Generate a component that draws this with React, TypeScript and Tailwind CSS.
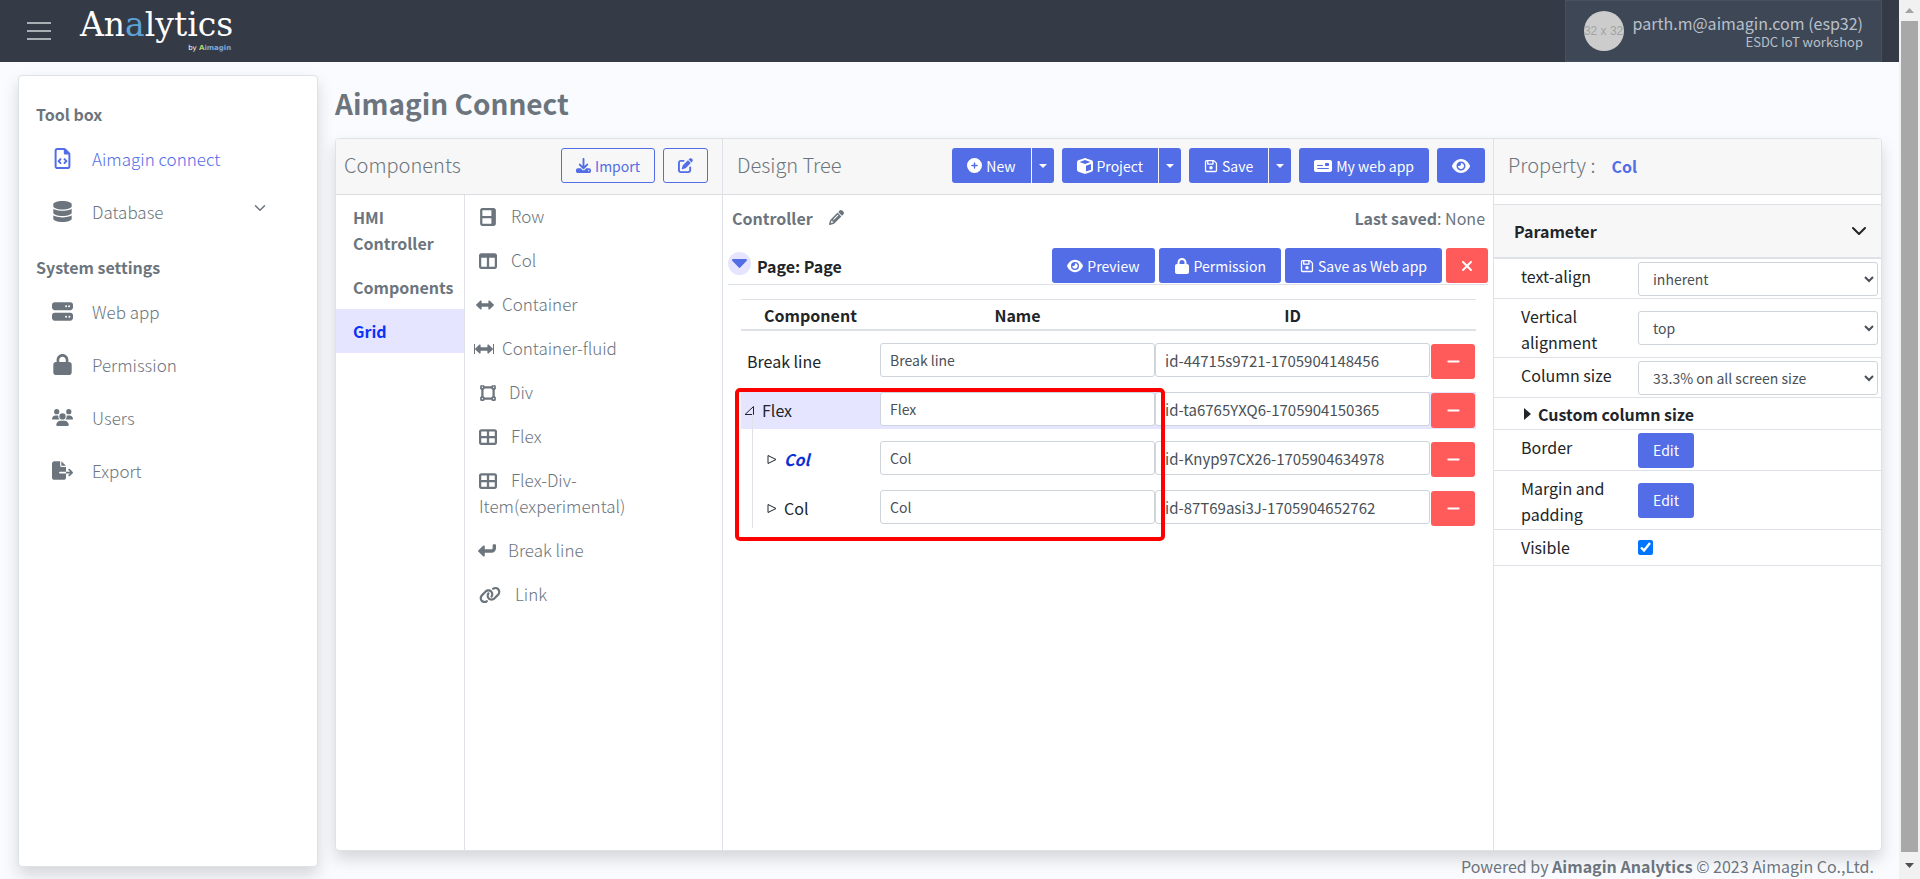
import type { ReactNode } from "react";
import type { IconType } from "react-icons";
import {
  FaCirclePlus,
  FaCube,
  FaDatabase,
  FaDownload,
  FaEye,
  FaFileExport,
  FaLeftRight,
  FaLink,
  FaLock,
  FaMinus,
  FaMoneyCheck,
  FaPencil,
  FaPenToSquare,
  FaRegFileCode,
  FaRegFloppyDisk,
  FaServer,
  FaTableCellsLarge,
  FaTableColumns,
  FaTurnDown,
  FaUsers,
  FaVectorSquare,
  FaXmark,
} from "react-icons/fa6";
import { FiChevronDown } from "react-icons/fi";
import clsx from "clsx";

const toolLinks = [
  { label: "Aimagin connect", icon: FaRegFileCode, active: true },
  { label: "Database", icon: FaDatabase, expandable: true },
];

const systemLinks = [
  { label: "Web app", icon: FaServer },
  { label: "Permission", icon: FaLock },
  { label: "Users", icon: FaUsers },
  { label: "Export", icon: FaFileExport },
];

const treeRows = [
  { kind: "Break line", id: "id-44715s9721-1705904148456", level: 0 },
  { kind: "Flex", id: "id-ta6765YXQ6-1705904150365", level: 0, open: true },
  { kind: "Col", id: "id-Knyp97CX26-1705904634978", level: 1, selected: true },
  { kind: "Col", id: "id-87T69asi3J-1705904652762", level: 1 },
];

type SideLinkProps = {
  label: string;
  icon: IconType;
  active?: boolean;
  expandable?: boolean;
};

function SideLink({ label, icon: Icon, active, expandable }: SideLinkProps) {
  return (
    <a href="#" className={clsx("flex h-[53px] items-center pl-7 pr-12 text-[17px] font-light", active && "text-[#536de6]")}>
      <span className="flex w-[30px] justify-center text-[21px]">
        <Icon />
      </span>
      <span className="ml-[15px] flex-1">{label}</span>
      {expandable && <FiChevronDown className="mb-2 text-[18px]" />}
    </a>
  );
}

function Button({ children, className, label }: { children: ReactNode; className?: string; label?: string }) {
  return (
    <button
      type="button"
      aria-label={label}
      className={clsx(
        "flex h-[35px] items-center justify-center gap-1 rounded-[3px] text-[14px] whitespace-nowrap",
        className ?? "bg-[#536de6] px-[15px] text-white"
      )}
    >
      {children}
    </button>
  );
}

function SplitButton({ icon, label }: { icon: ReactNode; label: string }) {
  return (
    <div className="flex h-[35px] text-[14px] text-white">
      <button type="button" className="flex items-center gap-1 rounded-l-[3px] bg-[#536de6] px-[15px]">
        {icon}
        {label}
      </button>
      <button
        type="button"
        aria-label={label + " options"}
        className="ml-px flex w-[22px] items-center justify-center rounded-r-[3px] bg-[#536de6]"
      >
        <svg width="8" height="4" viewBox="0 0 8 4" fill="currentColor">
          <path d="M0 0h8L4 4z" />
        </svg>
      </button>
    </div>
  );
}

function GridItem({ icon, children, className }: { icon: ReactNode; children: ReactNode; className: string }) {
  return (
    <li className="py-[9px] text-[17px] font-light leading-[26px]">
      <span className={clsx("mb-[3px] inline-flex items-center align-middle text-[18px]", className)}>{icon}</span>
      {children}
    </li>
  );
}

function Sidebar() {
  return (
    <nav className="w-[300px] shrink-0 rounded border border-[#dee2e6] bg-white pt-6 shadow-[0_8px_16px_rgba(0,0,0,0.15)]">
      <h2 className="pl-[17px] font-bold leading-7">Tool box</h2>
      <div className="mt-1">
        {toolLinks.map((link) => (
          <SideLink key={link.label} {...link} />
        ))}
      </div>
      <h2 className="mt-[15px] pl-[17px] font-bold leading-7">System settings</h2>
      <div className="mt-1">
        {systemLinks.map((link) => (
          <SideLink key={link.label} {...link} />
        ))}
      </div>
    </nav>
  );
}

function ComponentsPanel() {
  return (
    <section className="flex flex-col border-r border-[#dee2e6]">
      <header className="flex h-14 items-center gap-2 border-b border-[#dadce0] bg-[#f7f7f7] pb-[2px] pl-2 pr-[14px]">
        <h2 className="flex-1 pb-[2px] text-[20px] font-light">Components</h2>
        <Button className="border border-[#536de6] px-[14px] text-[#536de6]">
          <FaDownload className="text-[15px]" /> Import
        </Button>
        <Button className="border border-[#536de6] px-[14px] text-[#536de6]" label="Edit components">
          <FaPenToSquare className="text-[15px]" />
        </Button>
      </header>
      <div className="flex flex-1">
        <ul className="w-[129px] border-r border-[#dee2e6] font-bold leading-[26px]">
          <li className="py-[9px] pl-[17px] pr-3">HMI Controller</li>
          <li className="py-[9px] pl-[17px]">Components</li>
          <li className="bg-[#e5e5ff] py-[9px] pl-[17px] text-[#0b32f5]">Grid</li>
        </ul>
        <ul className="-mt-px flex-1 pl-[14px] pr-14">
          <GridItem className="mr-[14px]" icon={<FaTableColumns className="rotate-90" />}>Row</GridItem>
          <GridItem className="mr-[14px]" icon={<FaTableColumns />}>Col</GridItem>
          <GridItem className="-ml-[3px] mr-2" icon={<FaLeftRight />}>Container</GridItem>
          <GridItem
            className="-ml-[5px] mr-2"
            icon={
              <>
                <i className="h-[10px] w-px bg-current" />
                <FaLeftRight />
                <i className="h-[10px] w-px bg-current" />
              </>
            }
          >
            Container-fluid
          </GridItem>
          <GridItem className="mr-3" icon={<FaVectorSquare />}>Div</GridItem>
          <GridItem className="mr-[14px]" icon={<FaTableCellsLarge />}>Flex</GridItem>
          <GridItem className="mr-[14px]" icon={<FaTableCellsLarge />}>Flex-Div-Item(experimental)</GridItem>
          <GridItem className="-ml-px mr-3" icon={<FaTurnDown className="rotate-90" />}>Break line</GridItem>
          <GridItem className="mr-[14px]" icon={<FaLink className="text-[22px]" />}>Link</GridItem>
        </ul>
      </div>
    </section>
  );
}

function TreeTable() {
  return (
    <div className="relative ml-[18px] mr-[17px] mt-[14px]">
      <table className="w-full table-fixed border-separate border-spacing-0 text-[#212529]">
        <thead>
          <tr className="h-8 leading-7">
            <th className="w-[139px] border-b-2 border-t border-[#dee2e6]">Component</th>
            <th className="border-b-2 border-t border-[#dee2e6]">Name</th>
            <th className="border-b-2 border-t border-[#dee2e6]">ID</th>
            <th className="w-[46px] border-b-2 border-t border-[#dee2e6]" />
          </tr>
        </thead>
        <tbody>
          {treeRows.map((row) => {
            const cell = clsx("flex h-[37px]", row.open && "bg-[#e5e5ff]");
            return (
              <tr key={row.id}>
                <td className="p-0 pt-3">
                  <div className={clsx(cell, "items-center pb-[2px]", row.level ? "pl-[26px]" : row.open ? "pl-[3px]" : "pl-[6px]")}>
                    {row.open && (
                      <svg className="mr-[7px] mt-[2px]" width="11" height="11" viewBox="0 0 11 11" fill="none" stroke="currentColor">
                        <path d="M1 9.5h8.500V1.500z" />
                      </svg>
                    )}
                    {row.level > 0 && (
                      <svg className="mr-[7px] mt-[2px]" width="10" height="11" viewBox="0 0 10 11" fill="none" stroke="currentColor">
                        <path d="M1 1.500v8L9 5.500z" />
                      </svg>
                    )}
                    <span className={clsx(row.selected && "font-bold italic text-[#0b32d5]")}>{row.kind}</span>
                  </div>
                </td>
                <td className="p-0 pt-3">
                  <div className={cell}>
                    <input
                      aria-label="Name"
                      defaultValue={row.kind}
                      className="h-[34px] w-full rounded-[3px] border border-[#ced4da] bg-white px-[9px] text-[14px] text-[#495057]"
                    />
                  </div>
                </td>
                <td className="p-0 pt-3">
                  <div className={cell}>
                    <input
                      aria-label="ID"
                      defaultValue={row.id}
                      className="h-[34px] w-full rounded-[3px] border border-[#ced4da] bg-white px-[9px] text-[15px] text-[#495057]"
                    />
                  </div>
                </td>
                <td className="p-0 pt-3">
                  <div className={clsx(cell, "items-center pl-px")}>
                    <Button className="w-11 bg-[#ff5b5b] text-white" label={"Remove " + row.kind}>
                      <FaMinus className="text-[15px]" />
                    </Button>
                  </div>
                </td>
              </tr>
            );
          })}
        </tbody>
      </table>
      <div className="absolute left-[11px] top-[113px] h-[116px] w-px bg-[#dee2e6]" />
      <div className="pointer-events-none absolute -left-[6px] top-[89px] h-[153px] w-[430px] rounded-[5px] border-4 border-[#ff0000]" />
    </div>
  );
}

function DesignTree() {
  return (
    <section className="flex flex-col border-r border-[#dee2e6]">
      <header className="flex h-14 items-center gap-2 border-b border-[#dadce0] bg-[#f7f7f7] pb-[2px] pl-[14px] pr-2">
        <h2 className="flex-1 pb-[2px] text-[20px] font-light">Design Tree</h2>
        <SplitButton icon={<FaCirclePlus className="text-[15px]" />} label="New" />
        <SplitButton icon={<FaCube className="text-[16px]" />} label="Project" />
        <SplitButton icon={<FaRegFloppyDisk className="text-[14px]" />} label="Save" />
        <Button>
          <FaMoneyCheck className="text-[18px]" /> My web app
        </Button>
        <Button label="Preview design">
          <FaEye className="text-[18px]" />
        </Button>
      </header>
      <div className="flex h-[45px] items-center pl-[9px] pr-2">
        <strong>Controller</strong>
        <button type="button" aria-label="Rename controller" className="ml-4">
          <FaPencil className="text-[15px]" />
        </button>
        <p className="ml-auto">
          <strong>Last saved</strong>: None
        </p>
      </div>
      <div className="ml-[5px] mr-[5px] mt-2 flex h-[37px] items-start gap-1 border-b border-[#dee2e6]">
        <button
          type="button"
          aria-label="Collapse page"
          className="mt-1 flex size-[23px] items-center justify-center rounded-full bg-[#e5e5ff] text-[#536de6]"
        >
          <svg width="15" height="9" viewBox="0 0 15 9" fill="currentColor">
            <path d="M1 0h13a1 1 0 0 1 .700 1.700L8.500 8.300a1.300 1.300 0 0 1-2 0L.3 1.700A1 1 0 0 1 1 0z" />
          </svg>
        </button>
        <strong className="ml-[2px] flex-1 leading-[36px] text-[#212529]">Page: Page</strong>
        <Button>
          <FaEye className="text-[16px]" /> Preview
        </Button>
        <Button>
          <FaLock className="text-[16px]" /> Permission
        </Button>
        <Button>
          <FaRegFloppyDisk className="text-[14px]" /> Save as Web app
        </Button>
        <Button className="w-[42px] bg-[#ff5b5b] text-white" label="Delete page">
          <FaXmark className="text-[16px]" />
        </Button>
      </div>
      <TreeTable />
    </section>
  );
}

function PropertyRow({ label, id, className, children }: { label: string; id: string; className: string; children: ReactNode }) {
  return (
    <div className={clsx("flex items-center border-b border-[#dee2e6] pl-[27px] pr-[3px]", className)}>
      <label htmlFor={id} className="w-[117px] self-start pr-5 pt-1 leading-[26px]">
        {label}
      </label>
      {children}
    </div>
  );
}

function PropertySelect({ id, value }: { id: string; value: string }) {
  return (
    <select
      id={id}
      className="h-[34px] min-w-0 flex-1 rounded-[3px] border border-[#ced4da] bg-white pl-[10px] text-[14px] text-[#495057]"
    >
      <option>{value}</option>
    </select>
  );
}

function EditButton({ id }: { id: string }) {
  return (
    <button id={id} type="button" className="h-[35px] w-14 rounded-[3px] bg-[#536de6] text-[14px] text-white">
      Edit
    </button>
  );
}

function PropertyPanel() {
  return (
    <section>
      <header className="flex h-14 items-center gap-4 border-b border-[#dadce0] bg-[#f7f7f7] pb-[2px] pl-[14px]">
        <h2 className="pb-[2px] text-[20px] font-light">Property :</h2>
        <strong className="text-[#536de6]">Col</strong>
      </header>
      <div className="mt-[9px] text-[#212529]">
        <button
          type="button"
          className="flex h-[55px] w-full items-center justify-between border-b-2 border-t border-[#dee2e6] bg-[#f7f7f7] pl-5 pr-[10px] font-bold"
        >
          Parameter
          <FiChevronDown className="text-[24px]" />
        </button>
        <PropertyRow label="text-align" id="text-align" className="h-10">
          <PropertySelect id="text-align" value="inherent" />
        </PropertyRow>
        <PropertyRow label="Vertical alignment" id="vertical" className="h-[59px]">
          <PropertySelect id="vertical" value="top" />
        </PropertyRow>
        <PropertyRow label="Column size" id="column-size" className="h-10">
          <PropertySelect id="column-size" value="33.3% on all screen size" />
        </PropertyRow>
        <button type="button" className="flex h-8 w-full items-center gap-[7px] border-b border-[#dee2e6] pl-[30px] font-bold">
          <svg width="7" height="12" viewBox="0 0 7 12" fill="currentColor">
            <path d="M0 0l7 6-7 6z" />
          </svg>
          Custom column size
        </button>
        <PropertyRow label="Border" id="border" className="h-[41px]">
          <EditButton id="border" />
        </PropertyRow>
        <PropertyRow label="Margin and padding" id="margin" className="h-[59px]">
          <EditButton id="margin" />
        </PropertyRow>
        <PropertyRow label="Visible" id="visible" className="h-9">
          <input id="visible" type="checkbox" defaultChecked className="size-[15px] accent-[#0075ff]" />
        </PropertyRow>
      </div>
    </section>
  );
}

function TopBar() {
  return (
    <header className="flex h-[62px] items-center bg-[#343a46] pl-[27px] pr-[17px]">
      <button type="button" aria-label="Toggle menu" className="flex w-6 flex-col gap-[6px]">
        <i className="h-[2px] bg-[#a9adb4]" />
        <i className="h-[2px] bg-[#a9adb4]" />
        <i className="h-[2px] bg-[#a9adb4]" />
      </button>
      <a href="#" className="ml-[29px] flex flex-col pb-1 text-white">
        <span className="font-['DejaVu_Serif',serif] text-[33px] leading-[38px]">
          An<span className="text-[#5ea3d8]">a</span>lytics
        </span>
        <span className="self-end pr-[2px] font-['DejaVu_Sans',sans-serif] text-[7px] leading-[8px]">
          by <b className="text-[#b5d56a]">A</b>
          <b className="text-[#7fa8dc]">imagin</b>
        </span>
      </a>
      <div className="ml-auto flex h-full items-center border border-[#465161] bg-[#3e4755] pl-[18px] pr-[18px] text-[#b9c0ca]">
        <span className="flex size-10 items-center justify-center overflow-hidden rounded-full bg-[#cccccc] font-['Liberation_Sans',sans-serif] text-[12px] whitespace-nowrap text-[#a3a3a3]">
          32 x 32
        </span>
        <div className="ml-[9px] text-right">
          <p className="leading-[22px]">parth.m@aimagin.com (esp32)</p>
          <p className="text-[13px] leading-4">ESDC IoT workshop</p>
        </div>
      </div>
    </header>
  );
}

function ScrollRail() {
  return (
    <div className="flex w-[21px] shrink-0 flex-col items-center bg-[#f1f1f1]">
      <svg className="my-2 shrink-0" width="9" height="5" viewBox="0 0 9 5" fill="#a3a3a3">
        <path d="M0 5l4.500-5L9 5z" />
      </svg>
      <div className="w-[17px] flex-1 bg-[#a8a8a8]" />
      <svg className="my-[11px] shrink-0" width="9" height="5" viewBox="0 0 9 5" fill="#505050">
        <path d="M0 0l4.500 5L9 0z" />
      </svg>
    </div>
  );
}

export default function App() {
  return (
    <div className="flex min-h-screen font-['Noto_Sans_CJK_SC',sans-serif] text-[16px] leading-[26px] text-[#6c757d]">
      <div className="flex min-w-0 flex-1 flex-col bg-[#fafbff]">
        <TopBar />
        <div className="flex flex-1 gap-[17px] pl-[18px] pr-[17px] pt-[13px]">
          <div className="flex pb-3">
            <Sidebar />
          </div>
          <main className="flex min-w-0 flex-1 flex-col">
            <h1 className="mt-[6px] text-[28px] font-bold leading-[44px]">Aimagin Connect</h1>
            <div className="mt-[13px] grid flex-1 grid-cols-[387px_minmax(0,1fr)_387px] overflow-hidden rounded border border-[#dee2e6] bg-white shadow-[0_8px_16px_rgba(0,0,0,0.15)]">
              <ComponentsPanel />
              <DesignTree />
              <PropertyPanel />
            </div>
            <footer className="h-7 pr-2 pt-[2px] text-right">
              Powered by <strong>Aimagin Analytics</strong> © 2023 Aimagin Co.,Ltd.
            </footer>
          </main>
        </div>
      </div>
      <ScrollRail />
    </div>
  );
}
